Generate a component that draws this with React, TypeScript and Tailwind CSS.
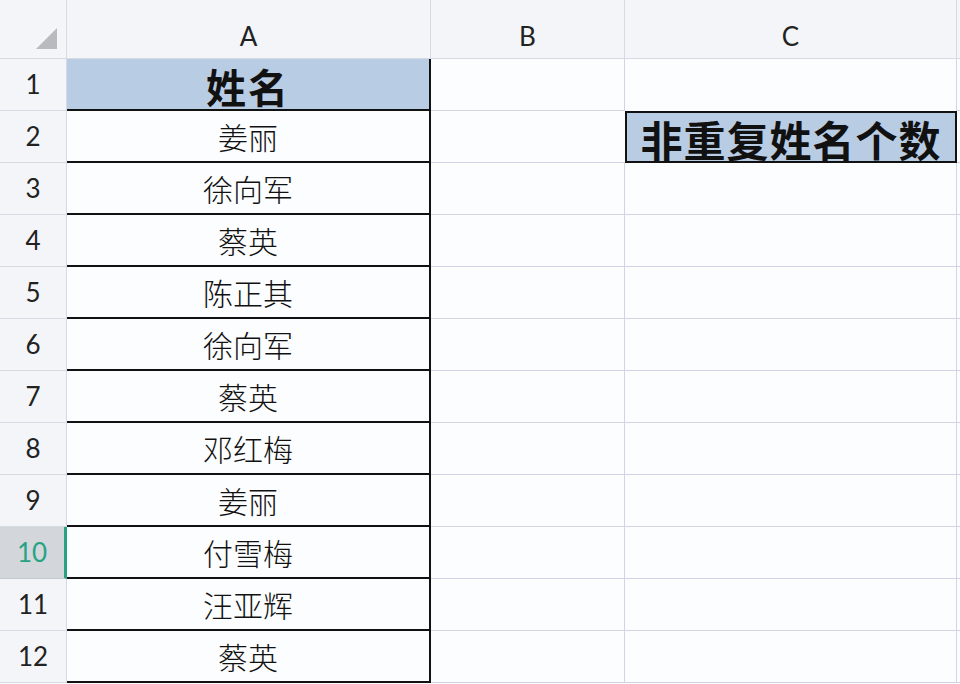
import React from "react";

const names = ["姜丽", "徐向军", "蔡英", "陈正其", "徐向军", "蔡英", "邓红梅", "姜丽", "付雪梅", "汪亚辉", "蔡英"];

const cjk = { fontFamily: '"Noto Sans CJK SC", "Noto Sans", sans-serif' };
const latin = { fontFamily: 'Lato, "Liberation Sans", sans-serif' };

function RowHead({ n }: { n: number }) {
  const active = n === 10;
  return (
    <div
      className={`flex items-center justify-center text-[26px] border-b border-r ${
        active
          ? "bg-[#d3d7dc] text-[#27a383] border-r-[3px] border-r-[#27a383] border-b-[#c5cad1]"
          : "bg-[#f3f5f8] text-[#222] border-b-[#d6dae2] border-r-[#d6dae2]"
      }`}
      style={latin}
    >
      {n}
    </div>
  );
}

export default function App() {
  return (
    <div className="w-[960px] h-[684px] overflow-hidden bg-[#fcfdff]">
      <div className="grid grid-cols-[67px_364px_194px_332px_1fr] grid-rows-[59px_repeat(12,52px)]">
        {/* header row */}
        <div className="relative bg-[#f3f5f8] border-b border-r border-[#d6dae2]">
          <svg className="absolute right-[9px] bottom-[9px]" width="21" height="21" viewBox="0 0 21 21">
            <polygon points="21,0 21,21 0,21" fill="#b7babf" />
          </svg>
        </div>
        {["A", "B", "C"].map((c) => (
          <div
            key={c}
            className="flex items-center justify-center pt-[14px] text-[26px] text-[#222] bg-[#f3f5f8] border-b border-r border-[#d6dae2]"
            style={latin}
          >
            {c}
          </div>
        ))}
        <div className="bg-[#f3f5f8] border-b border-[#d6dae2]" />

        {/* row 1 */}
        <RowHead n={1} />
        <div
          className="flex items-center justify-center bg-[#b8cce4] border-b-2 border-r-2 border-[#111] text-[40px] tracking-[2px] font-bold text-[#111] leading-none pt-[4px]"
          style={cjk}
        >
          姓名
        </div>
        <div className="border-b border-r border-[#d0d4e4]" />
        <div className="border-b-0 border-r border-[#d0d4e4]" />
        <div className="border-b border-[#d0d4e4]" />

        {names.map((name, i) => {
          const n = i + 2;
          return (
            <React.Fragment key={n}>
              <RowHead n={n} />
              <div
                className="flex items-center justify-center border-b-2 border-r-2 border-[#111] text-[30px] font-light text-[#111]"
                style={cjk}
              >
                {name}
              </div>
              <div className={`border-b border-[#d0d4e4] ${n === 2 ? "" : "border-r"}`} />
              {n === 2 ? (
                <div
                  className="flex items-center justify-center bg-[#b8cce4] border-2 border-[#111] text-[42px] tracking-[1px] font-bold text-[#111] whitespace-nowrap leading-none pt-[3px]"
                  style={cjk}
                >
                  非重复姓名个数
                </div>
              ) : (
                <div className="border-b border-r border-[#d0d4e4]" />
              )}
              <div className="border-b border-[#d0d4e4]" />
            </React.Fragment>
          );
        })}
      </div>
    </div>
  );
}
